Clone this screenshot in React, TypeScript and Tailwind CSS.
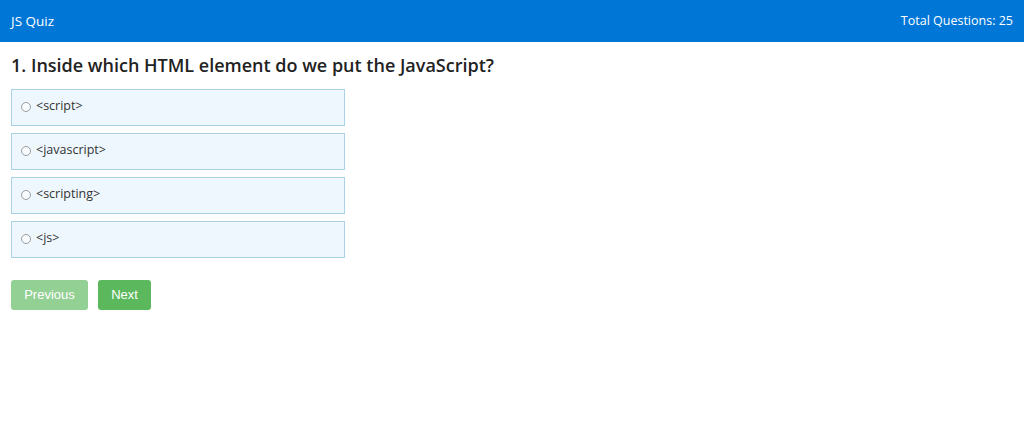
import React, { useState } from 'react';

const options = ['<script>', '<javascript>', '<scripting>', '<js>'];

export default function App() {
  const [selected, setSelected] = useState<number | null>(null);

  return (
    <div className="min-h-screen bg-white" style={{ fontFamily: '"Open Sans", "Noto Sans", sans-serif' }}>
      <header className="flex h-[42px] items-center justify-between bg-[#0076d7] px-[11px] text-[13px] text-white">
        <span className="text-[13.5px]">JS Quiz</span>
        <span className="text-[12.5px]">Total Questions: 25</span>
      </header>

      <main className="px-[11px]">
        <h1 className="mt-[11px] mb-[12px] text-[18px] font-semibold leading-[24px] text-[#222]">
          1. Inside which HTML element do we put the JavaScript?
        </h1>

        <div className="flex w-[334px] flex-col gap-[7px]">
          {options.map((opt, i) => (
            <label
              key={opt}
              className="flex h-[37px] cursor-pointer items-center gap-[5px] border border-[#a9d2e6] bg-[#eef7fe] pb-[2px] pl-[9px] text-[12.5px] text-[#333]"
            >
              <input
                type="radio"
                name="q1"
                checked={selected === i}
                onChange={() => setSelected(i)}
                className="h-[10px] w-[10px] accent-[#0076d7] opacity-70"
              />
              {opt}
            </label>
          ))}
        </div>

        <div className="mt-[22px] flex gap-[10px]" style={{ fontFamily: '"Liberation Sans", Arial, sans-serif' }}>
          <button
            disabled
            className="h-[30px] w-[77px] rounded-[3px] bg-[#93d093] text-[13px] text-white"
          >
            Previous
          </button>
          <button className="h-[30px] w-[53px] rounded-[3px] bg-[#5cb85c] text-[13px] text-white">
            Next
          </button>
        </div>
      </main>
    </div>
  );
}
